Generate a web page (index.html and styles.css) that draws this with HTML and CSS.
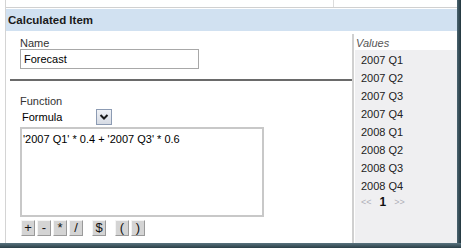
FILE: index.html
```html
<!DOCTYPE html>
<html lang="en">
<head>
    <title>Calculated Item</title>
    <link rel="stylesheet" href="styles.css">
</head>
<body>
<div class="window">
    <div class="main">
        <div class="content">
            <div class="top-strip"><div class="top-tick"></div></div>
            <div class="header">Calculated Item</div>
            <div class="panel">
                <div class="form">
                    <div class="field">
                        <label class="label">Name</label>
                        <div class="text-input">Forecast</div>
                    </div>
                    <div class="separator"></div>
                    <div class="field">
                        <label class="label">Function</label>
                        <div class="select">
                            <span class="select-value">Formula</span>
                            <span class="select-arrow">
                                <svg width="10" height="8" viewBox="0 0 10 8">
                                    <path d="M1.5 2 L5 5.5 L8.5 2" fill="none" stroke="#1a1a1a" stroke-width="2"/>
                                </svg>
                            </span>
                        </div>
                        <div class="formula">'2007 Q1' * 0.4 + '2007 Q3' * 0.6</div>
                        <div class="ops">
                            <div class="op-group">
                                <button class="op">+</button>
                                <button class="op">-</button>
                                <button class="op">*</button>
                                <button class="op">/</button>
                            </div>
                            <div class="op-group">
                                <button class="op">$</button>
                            </div>
                            <div class="op-group">
                                <button class="op">(</button>
                                <button class="op">)</button>
                            </div>
                        </div>
                    </div>
                </div>
                <div class="values">
                    <div class="values-title">Values</div>
                    <div class="values-list">
                        <div class="value">2007 Q1</div>
                        <div class="value">2007 Q2</div>
                        <div class="value">2007 Q3</div>
                        <div class="value">2007 Q4</div>
                        <div class="value">2008 Q1</div>
                        <div class="value">2008 Q2</div>
                        <div class="value">2008 Q3</div>
                        <div class="value">2008 Q4</div>
                        <div class="pager">
                            <span class="pager-link">&lt;&lt;</span>
                            <span class="pager-page">1</span>
                            <span class="pager-link">&gt;&gt;</span>
                        </div>
                    </div>
                </div>
            </div>
        </div>
        <div class="right-bar"></div>
    </div>
    <div class="bottom-bar"></div>
</div>
</body>
</html>
```

FILE: styles.css
```css
body {
    margin: 0;
    background-color: white;
    font-family: "Liberation Sans", Arial, sans-serif;
    font-size: 11px;
    color: #222;
}

.window {
    width: 461px;
    height: 248px;
    display: flex;
    flex-direction: column;
    overflow: hidden;
}

.main {
    flex-grow: 1;
    display: flex;
    min-height: 0;
}

.content {
    flex-grow: 1;
    margin-left: 5px;
    border-left: 1px solid #d4d4d4;
    display: flex;
    flex-direction: column;
}

.top-strip {
    flex-shrink: 0;
    height: 7px;
    border-bottom: 1px solid #d0d0d0;
    margin-bottom: 1px;
    padding-left: 327px;
}

.top-tick {
    width: 1px;
    height: 7px;
    background: #dcdcdc;
}

.header {
    flex-shrink: 0;
    height: 22px;
    line-height: 22px;
    padding-left: 2px;
    background: #d1e1f1;
    font-weight: bold;
    font-size: 11.5px;
    color: #1a1a1a;
}

.panel {
    flex-grow: 1;
    display: flex;
    min-height: 0;
}

.form {
    width: 342px;
    padding-left: 4px;
}

.field {
    padding-left: 10px;
}

.label {
    display: block;
    margin-top: 6px;
    height: 12px;
    line-height: 12px;
    color: #333;
}

.text-input {
    width: 174px;
    height: 18px;
    line-height: 18px;
    padding-left: 3px;
    border: 1px solid #a8a8a8;
    color: #000;
}

.separator {
    margin-top: 10px;
    height: 2px;
    background: #6a6a6a;
}

.field:last-child .label {
    margin-top: 14px;
}

.select {
    display: flex;
    align-items: center;
    margin-top: 1px;
    width: 92px;
    height: 17px;
    color: #000;
}

.select-value {
    flex-grow: 1;
    padding-left: 2px;
}

.select-arrow {
    width: 14px;
    height: 14px;
    display: flex;
    align-items: center;
    justify-content: center;
    border: 1px solid #8c9bb3;
    background: linear-gradient(#f0f2f6, #d6dbe4);
}

.formula {
    margin-top: 2px;
    width: 238px;
    height: 78px;
    padding: 4px 1px;
    border: 2px solid #c8c8c8;
    color: #000;
}

.ops {
    margin-top: 3px;
    display: flex;
    gap: 9px;
    padding-left: 1px;
}

.op-group {
    display: flex;
    gap: 2px;
}

.op {
    width: 14px;
    height: 16px;
    padding: 0;
    border: 1px solid;
    border-color: #f4f4f4 #9a9a9a #9a9a9a #f4f4f4;
    background: #d4d4d4;
    font-family: "Liberation Sans", Arial, sans-serif;
    font-size: 13px;
    line-height: 14px;
    color: #111;
}

.values {
    flex-grow: 1;
    display: flex;
    flex-direction: column;
    margin-top: 3px;
    border-left: 2px solid #d0d0d0;
}

.values-title {
    height: 16px;
    line-height: 19px;
    padding-left: 2px;
    font-style: italic;
    color: #555;
}

.values-list {
    flex-grow: 1;
    background: #efeff1;
    margin-left: 1px;
    padding-top: 1px;
}

.value {
    height: 18px;
    line-height: 18px;
    padding-left: 6px;
    color: #222;
}

.pager {
    height: 14px;
    line-height: 14px;
    padding-left: 6px;
    display: flex;
    gap: 8px;
    align-items: center;
}

.pager-link {
    color: #b0b0b8;
    font-size: 9px;
}

.pager-page {
    font-weight: bold;
    font-size: 12px;
    color: #111;
}

.right-bar {
    width: 4px;
    background: linear-gradient(to right, #4a6470, #23363e);
}

.bottom-bar {
    height: 5px;
    background: linear-gradient(#5a7480, #2a3e46);
}
```
